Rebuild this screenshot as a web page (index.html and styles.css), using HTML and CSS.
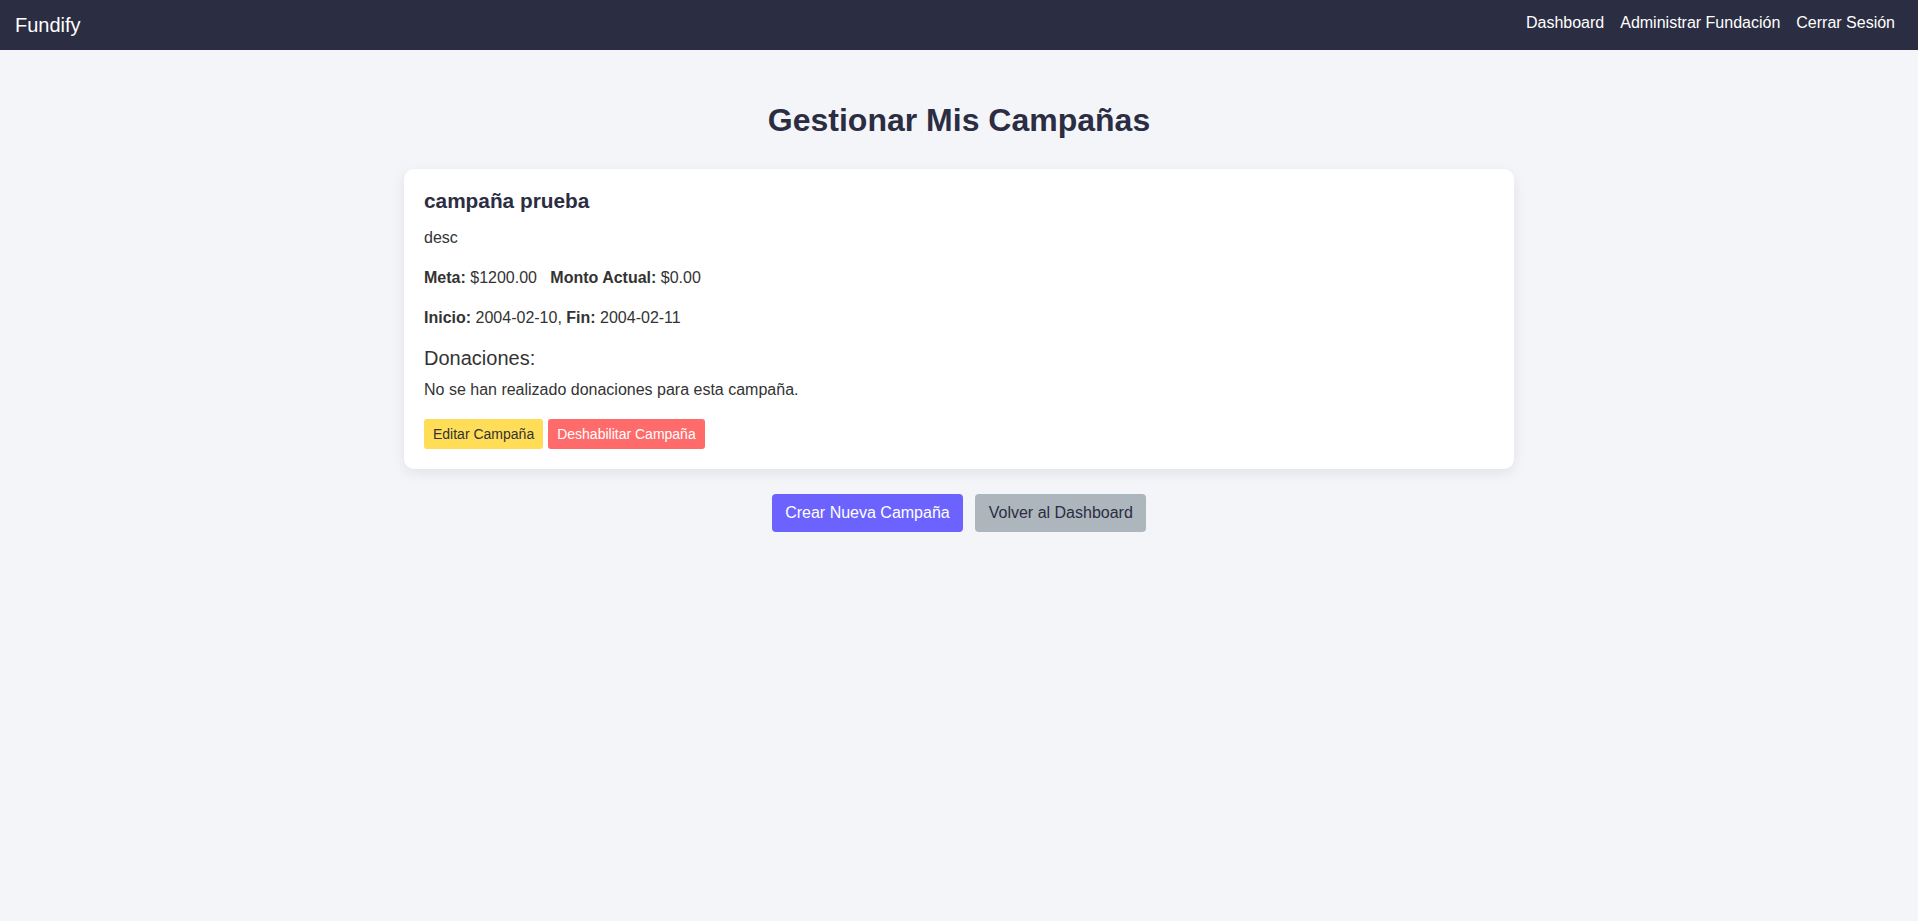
FILE: index.html
```html
<!DOCTYPE html>
<html lang="es">
<head>
<meta charset="utf-8">
<title>Fundify - Gestionar Mis Campañas</title>
<link rel="stylesheet" href="styles.css">
</head>
<body>
<nav class="navbar">
  <a class="brand" href="#">Fundify</a>
  <div class="nav-links">
    <a href="#">Dashboard</a>
    <a href="#">Administrar Fundación</a>
    <a href="#">Cerrar Sesión</a>
  </div>
</nav>
<main class="main">
  <h1 class="page-title">Gestionar Mis Campañas</h1>
  <section class="card">
    <h3 class="card-title">campaña prueba</h3>
    <p class="text">desc</p>
    <p class="text"><strong>Meta:</strong> $1200.00 &nbsp; <strong>Monto Actual:</strong> $0.00</p>
    <p class="text"><strong>Inicio:</strong> 2004-02-10, <strong>Fin:</strong> 2004-02-11</p>
    <h4 class="donations-title">Donaciones:</h4>
    <p class="text no-donations">No se han realizado donaciones para esta campaña.</p>
    <div class="card-actions">
      <a class="btn-sm btn-warning" href="#">Editar Campaña</a>
      <a class="btn-sm btn-danger" href="#">Deshabilitar Campaña</a>
    </div>
  </section>
  <div class="page-actions">
    <a class="btn btn-primary" href="#">Crear Nueva Campaña</a>
    <a class="btn btn-secondary" href="#">Volver al Dashboard</a>
  </div>
</main>
</body>
</html>
```
FILE: styles.css
```css
* { box-sizing: border-box; }
html, body { margin: 0; padding: 0; }
body {
  font-family: "Liberation Sans", Arial, sans-serif;
  background: #f4f5f9;
  color: #333;
  min-height: 921px;
}
a { text-decoration: none; }

.navbar {
  height: 50px;
  background: #2b2d42;
  display: flex;
  align-items: center;
  justify-content: space-between;
  padding: 0 15px;
}
.brand {
  color: #fff;
  font-size: 20px;
  line-height: 23px;
}
.nav-links {
  display: flex;
  padding-bottom: 4px;
}
.nav-links a {
  color: #fff;
  font-size: 16px;
  padding: 0 8px;
}

.main {
  padding-top: 52px;
  display: flex;
  flex-direction: column;
  align-items: center;
}
.page-title {
  margin: 0 0 30px;
  font-size: 32px;
  font-weight: bold;
  color: #2b2d42;
  text-align: center;
}
.card {
  width: 1110px;
  background: #fff;
  border-radius: 10px;
  padding: 20px;
  box-shadow: 0 4px 14px rgba(0, 0, 0, 0.08);
}
.card-title {
  margin: 0 0 12px;
  font-size: 20.8px;
  line-height: 1.2;
  font-weight: bold;
  color: #2b2d42;
}
.text {
  margin: 0 0 16px;
  font-size: 16px;
  line-height: 24px;
  color: #333;
}
.donations-title {
  margin: 0 0 8px;
  font-size: 20px;
  line-height: 1.2;
  font-weight: normal;
  color: #333;
}
.no-donations { margin-bottom: 17px; }
.card-actions {
  display: flex;
  gap: 5px;
}
.btn-sm {
  display: inline-block;
  font-size: 14px;
  line-height: 18px;
  padding: 6px 9px;
  border-radius: 3px;
}
.btn-warning { background: #ffdd57; color: #333; }
.btn-danger { background: #ff6b6b; color: #fff; }

.page-actions {
  margin-top: 25px;
  display: flex;
  gap: 12px;
}
.btn {
  display: inline-block;
  font-size: 16px;
  line-height: 18px;
  padding: 10px 13.5px;
  border-radius: 4px;
}
.btn-primary { background: #6c63ff; color: #fff; }
.btn-secondary { background: #adb5bd; color: #2b2d42; }
```
